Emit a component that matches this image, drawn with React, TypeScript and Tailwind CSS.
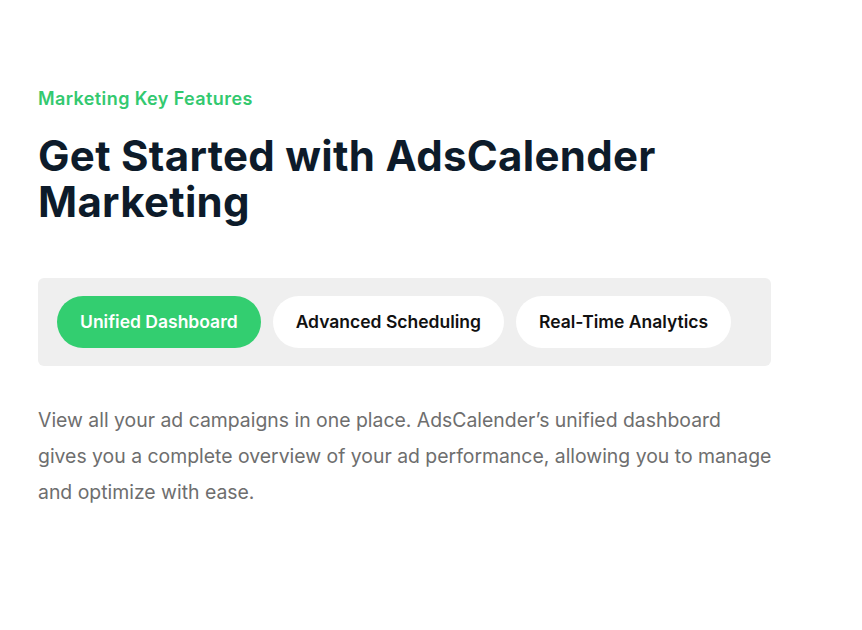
import { useState } from "react";

const tabs = [
  {
    id: "dashboard",
    label: "Unified Dashboard",
    text: "View all your ad campaigns in one place. AdsCalender’s unified dashboard gives you a complete overview of your ad performance, allowing you to manage and optimize with ease.",
  },
  {
    id: "scheduling",
    label: "Advanced Scheduling",
    text: "Plan and schedule your ads ahead of time with flexible calendars, so every campaign goes live exactly when your audience is ready.",
  },
  {
    id: "analytics",
    label: "Real-Time Analytics",
    text: "Track clicks, impressions and conversions as they happen, and react quickly with data that is always up to date.",
  },
];

export default function App() {
  const [active, setActive] = useState("dashboard");
  const current = tabs.find((t) => t.id === active) ?? tabs[0];

  return (
    <div className="min-h-screen bg-white font-['Inter',sans-serif]">
      <section className="px-[38px] pt-[86px]">
        <p className="text-[18px] font-semibold leading-[26px] tracking-[0.4px] text-[#33c96f]">Marketing Key Features</p>
        <h2 className="mt-[21px] max-w-[690px] text-[42px] font-bold leading-[46px] tracking-[0.3px] text-[#0d1b2a]">
          Get Started with AdsCalender Marketing
        </h2>

        <div className="mt-[53px] flex w-[733px] gap-[12px] rounded-[6px] bg-[#efefef] px-[19px] py-[18px]">
          {tabs.map((t) => (
            <button
              key={t.id}
              type="button"
              onClick={() => setActive(t.id)}
              className={
                "h-[52px] rounded-full px-[23px] text-[17.5px] font-semibold " +
                (t.id === active ? "bg-[#33ce70] text-white" : "bg-white text-[#111]")
              }
            >
              {t.label}
            </button>
          ))}
        </div>

        <p className="mt-[36px] w-[736px] text-[19.4px] leading-[36px] text-[#6e6e6e]">{current.text}</p>
      </section>
    </div>
  );
}
